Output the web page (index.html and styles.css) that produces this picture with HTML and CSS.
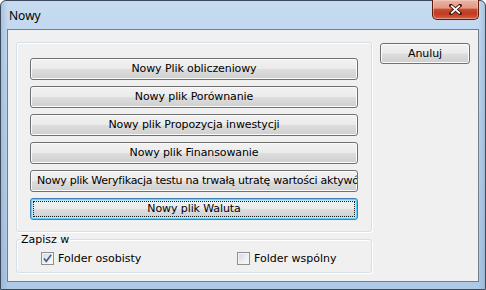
FILE: index.html
```html
<!DOCTYPE html>
<html lang="pl">
<head>
<meta charset="utf-8">
<title>Nowy</title>
<link rel="stylesheet" href="styles.css">
</head>
<body>
<div class="window">
  <div class="titlebar">
    <span class="title">Nowy</span>
    <div class="close">
      <svg width="13" height="11" viewBox="0 0 13 11"><path d="M2 1.5 L11 9.5 M11 1.5 L2 9.5" stroke="#4a1810" stroke-width="3.6" stroke-linecap="square" fill="none"/><path d="M2.2 1.7 L10.8 9.3 M10.8 1.7 L2.2 9.3" stroke="#ffffff" stroke-width="1.8" fill="none"/></svg>
    </div>
  </div>
  <div class="client">
    <div class="top-row">
      <div class="group list">
        <button class="btn wide">Nowy Plik obliczeniowy</button>
        <button class="btn wide">Nowy plik Porównanie</button>
        <button class="btn wide">Nowy plik Propozycja inwestycji</button>
        <button class="btn wide">Nowy plik Finansowanie</button>
        <button class="btn wide overflow">Nowy plik Weryfikacja testu na trwałą utratę wartości aktywó</button>
        <button class="btn wide default">Nowy plik Waluta</button>
      </div>
      <button class="btn cancel">Anuluj</button>
    </div>
    <fieldset class="group save">
      <legend>Zapisz w</legend>
      <div class="checks">
        <label class="check"><span class="box"><svg width="11" height="11" viewBox="0 0 11 11"><path d="M2 5.5 L4.3 8.3 L9.2 1.8" stroke="#4b5f8e" stroke-width="1.7" fill="none"/></svg></span>Folder osobisty</label>
        <label class="check"><span class="box"></span>Folder wspólny</label>
      </div>
    </fieldset>
  </div>
</div>
</body>
</html>
```
FILE: styles.css
```css
* { box-sizing: border-box; }
html, body { margin: 0; padding: 0; }
body {
  width: 486px;
  height: 290px;
  overflow: hidden;
  font-family: "DejaVu Sans", sans-serif;
  font-size: 11px;
  color: #000;
  background: #ffffff;
}
.window {
  width: 486px;
  height: 290px;
  border: 1px solid #3b4b5c;
  border-radius: 6px 6px 0 0;
  background:
    linear-gradient(90deg, rgba(120,150,185,0.35) 0px, rgba(255,255,255,0) 7px, rgba(255,255,255,0) 477px, rgba(120,150,185,0.35) 484px),
    linear-gradient(180deg, #c6dbf0 0%, #bcd3ec 35%, #aec9e7 100%);
  display: flex;
  flex-direction: column;
}
.titlebar {
  height: 28px;
  flex: none;
  display: flex;
  justify-content: space-between;
  align-items: flex-start;
  padding: 0 6px 0 8px;
}
.title {
  font-family: "Noto Sans", sans-serif;
  font-size: 12px;
  line-height: 16px;
  margin-top: 7px;
}
.close {
  width: 47px;
  height: 20px;
  margin-top: -1px;
  border: 1px solid #5c1a10;
  border-top: none;
  border-radius: 0 0 5px 5px;
  background: linear-gradient(180deg, #ebb4a5 0%, #e29886 42%, #c94a30 50%, #c03a20 72%, #d5623f 100%);
  box-shadow: inset 0 0 0 1px rgba(255,220,210,0.45);
  display: flex;
  align-items: center;
  justify-content: center;
}
.client {
  flex: none;
  margin: 0 6px;
  height: 253px;
  border: 1px solid #717f8c;
  background: #f0f0f0;
  padding: 12px 0 0 8px;
}
.top-row {
  display: flex;
  align-items: flex-start;
  gap: 8px;
}
.group {
  border: 1px solid #d5dfe5;
  border-radius: 3px;
  box-shadow: inset 1px 1px 0 #ffffff, 1px 1px 0 #ffffff;
}
.list {
  width: 356px;
  height: 190px;
  padding: 15px 13px 11px;
  display: flex;
  flex-direction: column;
  gap: 6px;
}
.btn {
  display: block;
  font-family: "DejaVu Sans", sans-serif;
  font-size: 11px;
  line-height: 20px;
  letter-spacing: -0.1px;
  color: #000;
  height: 22px;
  margin: 0;
  padding: 0 4px;
  border: 1px solid #707070;
  border-radius: 3px;
  background: linear-gradient(180deg, #f2f2f2 0%, #ebebeb 48%, #dddddd 52%, #cfcfcf 100%);
  box-shadow: inset 0 0 0 1px #fbfbfb;
  white-space: nowrap;
  overflow: hidden;
  text-align: center;
  position: relative;
}
.wide { width: 328px; flex: none; }
.overflow { text-align: left; padding-left: 6px; letter-spacing: -0.26px; }
.cancel {
  width: 90px;
  height: 21px;
  line-height: 19px;
  margin-top: 1px;
}
.default {
  border-color: #3c7fb1;
  box-shadow: inset 0 0 0 1px #5fd0fb, inset 0 0 0 2px #b9e8fb;
}
.default::after {
  content: "";
  position: absolute;
  inset: 2px;
  border: 1px dotted #1a1a1a;
}
.save {
  width: 356px;
  min-width: 0;
  margin: 1px 0 0 0;
  padding: 6px 0 7px 0;
}
.save legend {
  margin-left: 3px;
  padding: 0 1px;
  line-height: 13px;
  font-size: 11px;
}
.checks {
  display: grid;
  grid-template-columns: 196px auto;
  padding-left: 24px;
}
.check {
  display: flex;
  align-items: center;
  gap: 4px;
  height: 13px;
  line-height: 13px;
}
.box {
  width: 13px;
  height: 13px;
  flex: none;
  border: 1px solid #8e8f8f;
  background: linear-gradient(135deg, #d2d5da 0%, #eceef0 55%, #fbfbfb 100%);
  box-shadow: inset 0 0 0 1px #f4f4f4;
  display: flex;
  align-items: center;
  justify-content: center;
}
```
